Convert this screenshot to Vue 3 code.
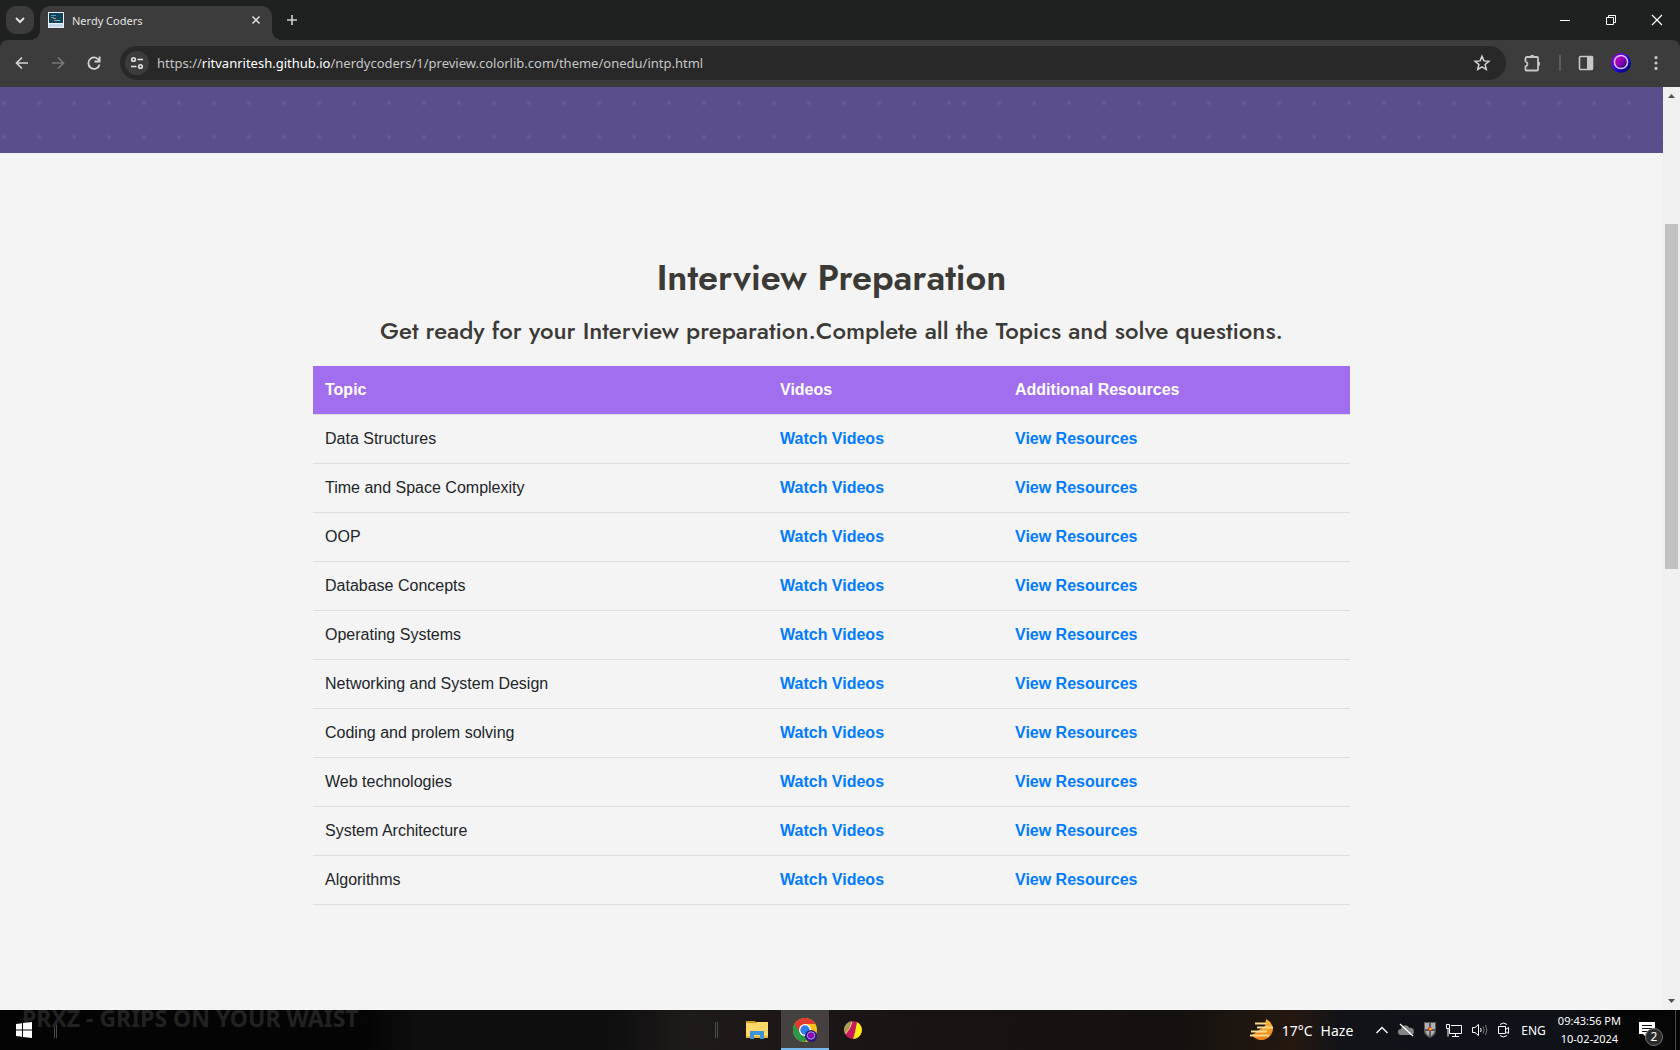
<template>
    <div class="desktop">
        <header class="tabstrip">
            <button class="tabstrip__search" aria-label="Search tabs">
                <svg width="28" height="28" viewBox="0 0 28 28" fill="none" stroke="#e3e3e3" stroke-width="2">
                    <path d="M10 12l4 4 4-4" />
                </svg>
            </button>
            <div class="tab">
                <svg class="tab__favicon" width="16" height="16" viewBox="0 0 16 16">
                    <rect width="16" height="16" fill="#e8f1f8" />
                    <rect x="1" y="1" width="14" height="10" fill="#15435c" />
                    <path d="M3 3.500h5M3 5.500h3" stroke="#4b9fc0" />
                    <path d="M5 6.500h3M6 8.500h2" stroke="#c98a5a" />
                    <path d="M8 8.500h4" stroke="#5bc0c8" />
                    <rect x="1" y="12" width="14" height="3" fill="#c3d8ea" />
                </svg>
                <span class="tab__title">Nerdy Coders</span>
                <button class="tab__close" aria-label="Close tab">
                    <svg width="16" height="16" viewBox="0 0 16 16" stroke="#e3e3e3" stroke-width="1.500">
                        <path d="M4.500 4.500l7 7M11.500 4.500l-7 7" />
                    </svg>
                </button>
            </div>
            <button class="tabstrip__new" aria-label="New tab">
                <svg width="28" height="28" viewBox="0 0 28 28" stroke="#d0d0d0" stroke-width="1.600">
                    <path d="M14 9v10M9 14h10" />
                </svg>
            </button>
            <div class="window-controls">
                <button aria-label="Minimize">
                    <svg width="46" height="40" viewBox="0 0 46 40" stroke="#fff"><path d="M18 20.500h10" /></svg>
                </button>
                <button aria-label="Restore">
                    <svg width="46" height="40" viewBox="0 0 46 40" fill="none" stroke="#fff">
                        <path d="M18.500 17.500h7v7h-7zM20.500 17.500v-2h7v7h-2" />
                    </svg>
                </button>
                <button aria-label="Close">
                    <svg width="46" height="40" viewBox="0 0 46 40" stroke="#fff" stroke-width="1.200">
                        <path d="M18 15l10 10M28 15l-10 10" />
                    </svg>
                </button>
            </div>
        </header>

        <div class="toolbar-wrap">
            <nav class="toolbar">
                <button class="toolbar__button" aria-label="Back">
                    <svg width="20" height="20" viewBox="0 0 20 20" fill="none" stroke="#d4d4d4" stroke-width="1.700">
                        <path d="M16 10H5M10 4.500L4.500 10l5.500 5.500" />
                    </svg>
                </button>
                <button class="toolbar__button" aria-label="Forward" disabled>
                    <svg width="20" height="20" viewBox="0 0 20 20" fill="none" stroke="#777" stroke-width="1.700">
                        <path d="M4 10h11M10 4.500l5.500 5.500-5.500 5.500" />
                    </svg>
                </button>
                <button class="toolbar__button" aria-label="Reload">
                    <svg width="20" height="20" viewBox="0 0 20 20" fill="none" stroke="#d4d4d4" stroke-width="1.800">
                        <path d="M15.500 8.500A5.700 5.700 0 1 0 15.600 11.500M15.600 3.500v5H10.500" />
                    </svg>
                </button>
                <div class="omnibox">
                    <button class="omnibox__info" aria-label="View site information">
                        <svg width="14" height="14" viewBox="0 0 14 14" fill="none" stroke="#e3e3e3" stroke-width="1.600">
                            <circle cx="3.500" cy="3.500" r="1.800" />
                            <path d="M7.500 3.500h5.500M1 10.500h5.500" />
                            <circle cx="10.500" cy="10.500" r="1.800" />
                        </svg>
                    </button>
                    <span class="omnibox__url">https://<b>ritvanritesh.github.io</b>/nerdycoders/1/preview.colorlib.com/theme/onedu/intp.html</span>
                    <button class="omnibox__star" aria-label="Bookmark this tab">
                        <svg width="18" height="18" viewBox="0 0 18 18" fill="none" stroke="#d4d4d4" stroke-width="1.500">
                            <path d="M9 2.300l1.900 4.600 5 .4-3.800 3.200 1.200 4.900L9 12.800l-4.300 2.600 1.200-4.900L2.100 7.300l5-.4z" />
                        </svg>
                    </button>
                </div>
                <div class="toolbar__actions">
                    <button aria-label="Extensions">
                        <svg width="20" height="20" viewBox="0 0 20 20">
                            <path d="M3.500 5.500q0-1.500 1.500-1.500h10q1 0 1 1v11.500q0 1-1 1H4.500q-1 0-1-1v-3q2-.6 2-2.500t-2-2.500z"
                                fill="none" stroke="#c7c7c7" stroke-width="1.800" />
                            <path d="M8 4a2.200 2.200 0 0 1 4.400 0zM16 8.500a2.200 2.200 0 0 1 0 4.400z" fill="#c7c7c7" />
                        </svg>
                    </button>
                    <i class="toolbar__divider"></i>
                    <button aria-label="Side panel">
                        <svg width="16" height="16" viewBox="0 0 16 16">
                            <rect x="1.500" y="1.500" width="13" height="13" rx="1" fill="none" stroke="#c7c7c7" stroke-width="1.600" />
                            <path d="M9 1h6v14H9z" fill="#c7c7c7" />
                        </svg>
                    </button>
                    <button aria-label="Profile">
                        <svg width="20" height="20" viewBox="0 0 20 20">
                            <defs>
                                <linearGradient id="orb" x1="0" y1="0" x2="1" y2="1">
                                    <stop offset="0" stop-color="#d000d8" />
                                    <stop offset="0.500" stop-color="#8a00b0" />
                                    <stop offset="1" stop-color="#1a0a60" />
                                </linearGradient>
                                <linearGradient id="halo" x1="0" y1="0" x2="1" y2="1">
                                    <stop offset="0" stop-color="#b000d0" />
                                    <stop offset="0.600" stop-color="#1a08d0" />
                                    <stop offset="1" stop-color="#050530" />
                                </linearGradient>
                            </defs>
                            <circle cx="10" cy="10" r="10" fill="url(#halo)" />
                            <circle cx="10" cy="9" r="6.600" fill="url(#orb)" stroke="#d0c4ff" stroke-width="1.500" />
                        </svg>
                    </button>
                    <button aria-label="Menu">
                        <svg width="16" height="16" viewBox="0 0 16 16" fill="#c7c7c7">
                            <circle cx="8" cy="2.600" r="1.600" />
                            <circle cx="8" cy="8" r="1.600" />
                            <circle cx="8" cy="13.400" r="1.600" />
                        </svg>
                    </button>
                </div>
            </nav>
        </div>

        <div class="viewport">
            <main class="page">
                <div class="page__banner">
                    <div class="page__pattern"></div>
                    <div class="page__pattern"></div>
                </div>
                <section class="prep">
                    <h2 class="prep__title">Interview Preparation</h2>
                    <h4 class="prep__subtitle">Get ready for your Interview preparation.Complete all the Topics and solve questions.</h4>
                    <table class="prep__table">
                        <thead>
                            <tr>
                                <th class="prep__topic">Topic</th>
                                <th class="prep__videos">Videos</th>
                                <th>Additional Resources</th>
                            </tr>
                        </thead>
                        <tbody>
                            <tr v-for="topic in topics" :key="topic">
                                <td>{{ topic }}</td>
                                <td><a href="#">Watch Videos</a></td>
                                <td><a href="#">View Resources</a></td>
                            </tr>
                        </tbody>
                    </table>
                </section>
            </main>
            <div class="scrollbar">
                <svg width="17" height="17" viewBox="0 0 17 17"><path d="M5 11l3.500-4 3.500 4z" fill="#505050" /></svg>
                <div class="scrollbar__before"></div>
                <div class="scrollbar__thumb"></div>
                <div class="scrollbar__after"></div>
                <svg width="17" height="17" viewBox="0 0 17 17"><path d="M5 6l3.500 4L12 6z" fill="#505050" /></svg>
            </div>
        </div>

        <footer class="taskbar">
            <span class="taskbar__wallpaper">PRXZ - GRIPS ON YOUR WAIST</span>
            <button class="taskbar__start" aria-label="Start">
                <svg width="16" height="16" viewBox="0 0 16 16" fill="#fff">
                    <path d="M0 2l6-.8v6.300H0zM7 1l9-1v7.500H7zM0 8.500h6v6.300L0 14zM7 8.500h9V16l-9-1z" />
                </svg>
            </button>
            <i class="taskbar__grip"></i>
            <div class="taskbar__gap-left"></div>
            <i class="taskbar__grip"></i>
            <div class="taskbar__apps">
                <button aria-label="File Explorer">
                    <svg width="24" height="24" viewBox="0 0 24 24">
                        <path d="M1 3h9l1.500 2H1z" fill="#d99a1c" />
                        <path d="M1 5h9l2-1h11v16H1z" fill="#ffd867" />
                        <path d="M1 18h22v2H1z" fill="#e9b33c" />
                        <path d="M5 13h14v8h-4v-4H9v4H5z" fill="#3a92d8" />
                    </svg>
                </button>
                <button class="taskbar__app--active" aria-label="Google Chrome">
                    <svg width="24" height="24" viewBox="0 0 24 24">
                        <circle cx="12" cy="12" r="12" fill="#fbc116" />
                        <path d="M1.600 6A12 12 0 0 0 12 24l5.200-9L12 12z" fill="#2a9a48" />
                        <path d="M12 6h10.400A12 12 0 0 0 1.600 6l5.200 9z" fill="#e33b2e" />
                        <circle cx="12" cy="12" r="6" fill="#fff" />
                        <circle cx="12" cy="12" r="4.700" fill="#2f7de9" />
                        <circle cx="18" cy="18" r="6" fill="#2a1780" />
                        <circle cx="18" cy="17.500" r="3.700" fill="#8b00b5" stroke="#b59be8" />
                    </svg>
                </button>
                <button aria-label="Media player">
                    <svg width="18" height="18" viewBox="0 0 18 18">
                        <circle cx="9" cy="9" r="9" fill="#c8185e" />
                        <path d="M13 1a9 9 0 0 1-4 17C11 12 12 7 13 1z" fill="#f8ee10" />
                        <path d="M0 9A9 9 0 0 1 8 0Q6 7 1 13z" fill="#a8a050" />
                        <path d="M8 1Q6 8 1.500 13" stroke="#e7df8a" fill="none" />
                    </svg>
                </button>
            </div>
            <div class="taskbar__gap-right"></div>
            <div class="tray">
                <button class="tray__weather">
                    <svg width="24" height="24" viewBox="0 0 24 24">
                        <defs>
                            <linearGradient id="sun" x1="0" y1="0" x2="0" y2="1">
                                <stop offset="0" stop-color="#f7b73a" />
                                <stop offset="1" stop-color="#ef7d17" />
                            </linearGradient>
                        </defs>
                        <path d="M16 1Q22 4 23 10.500A11.500 11.500 0 0 1 2 17L15 8z" fill="url(#sun)" />
                        <path d="M5 5.500h11M7 9.500h16M1 13.500h16M0 17.500h19" stroke="#f8dc8c" stroke-width="1.800" />
                    </svg>
                    <span>17°C</span>
                    <span>Haze</span>
                </button>
                <div class="tray__icons">
                    <svg width="12" height="16" viewBox="0 0 12 16" fill="none" stroke="#fff" stroke-width="1.300">
                        <path d="M.5 11L6 5.500 11.500 11" />
                    </svg>
                    <svg width="16" height="16" viewBox="0 0 16 16">
                        <path d="M3 13a3 3 0 0 1 0-6 4.500 4.500 0 0 1 8.500-1A3.500 3.500 0 0 1 13 13z" fill="#858585" />
                        <path d="M2 2l13 12" stroke="#fff" stroke-width="1.300" />
                    </svg>
                    <svg width="12" height="16" viewBox="0 0 12 16">
                        <path d="M0 0h12v9q0 4-6 7-6-3-6-7z" fill="#5c5c5c" />
                        <path d="M1 1h4v6H1zM7 1h4v6H7zM1.500 9H5v5q-3-2-3.500-5zM7 9h3.500Q10 12 7 14z" fill="#b0b0b0" />
                        <circle cx="6" cy="7" r="2" fill="#e23a20" />
                        <path d="M5.500 6h2v2h-2z" fill="#ffc928" />
                    </svg>
                    <svg width="16" height="16" viewBox="0 0 16 16" fill="none" stroke="#fff">
                        <path d="M5 3.500h10.500v8H3.500V7M9.500 11.500v3M6 14.500h7M.5 2.500h3v4h-3zM2 6.500v8" />
                    </svg>
                    <svg width="16" height="16" viewBox="0 0 16 16" fill="none" stroke="#fff">
                        <path d="M.5 5.500h2.500L6.500 2.500v11L3 10.500H.5z" />
                        <path d="M8.500 6q1.500 2 0 4" />
                        <path d="M11 4.500q2.500 3.500 0 7M13.500 3q3 5 0 10" stroke="#777" />
                    </svg>
                    <svg width="12" height="16" viewBox="0 0 12 16" fill="none" stroke="#fff">
                        <path d="M.5 4.500h7v7h-7zM7.500 7.500l3-2v6l-3-2M2 2.500Q5.500-.5 9 2.500M2 13.500q3.500 3 7 0" />
                    </svg>
                </div>
                <span class="tray__lang">ENG</span>
                <div class="tray__clock">
                    <span>09:43:56 PM</span>
                    <span>10-02-2024</span>
                </div>
                <button class="tray__notify" aria-label="Notifications">
                    <svg width="16" height="16" viewBox="0 0 16 16">
                        <path d="M0 0h16v12H7v3l-3-3H0z" fill="#fff" />
                        <path d="M3 3.500h10M3 6.500h10M3 9.500h6" stroke="#111" />
                    </svg>
                    <span class="tray__badge">2</span>
                </button>
            </div>
        </footer>
    </div>
</template>

<script setup>
import { ref } from 'vue';

const topics = ref([
    'Data Structures',
    'Time and Space Complexity',
    'OOP',
    'Database Concepts',
    'Operating Systems',
    'Networking and System Design',
    'Coding and prolem solving',
    'Web technologies',
    'System Architecture',
    'Algorithms'
]);
</script>

<style>
body {
    margin: 0;
}
</style>

<style scoped>
.desktop {
    display: flex;
    flex-direction: column;
    min-height: 100vh;
    background-color: #f4f4f4;
    font-family: "Segoe UI", "Noto Sans", sans-serif;
}

button {
    display: flex;
    align-items: center;
    justify-content: center;
    padding: 0;
    border: none;
    background: none;
    color: inherit;
    font: inherit;
}

svg {
    display: block;
    flex: none;
}

/* tab strip */
.tabstrip {
    display: flex;
    height: 40px;
    padding-left: 6px;
    background-color: #1f2120;
}

.tabstrip__search {
    width: 28px;
    height: 28px;
    margin: 6px 6px 0 0;
    border-radius: 10px;
    background-color: #3c3c3c;
}

.tab {
    position: relative;
    display: flex;
    align-items: center;
    box-sizing: border-box;
    width: 232px;
    height: 34px;
    margin-top: 6px;
    padding: 0 8px 6px;
    border-radius: 10px 10px 0 0;
    background-color: #3c3c3c;
}

.tab::before,
.tab::after {
    content: "";
    position: absolute;
    bottom: 0;
    width: 10px;
    height: 10px;
}

.tab::before {
    right: 100%;
    background: radial-gradient(circle at 0 0, transparent 10px, #3c3c3c 10px);
}

.tab::after {
    left: 100%;
    background: radial-gradient(circle at 100% 0, transparent 10px, #3c3c3c 10px);
}

.tab__title {
    flex: 1;
    margin-left: 8px;
    color: #e3e3e3;
    font-size: 11px;
}

.tabstrip__new {
    width: 28px;
    height: 28px;
    margin: 6px 0 0 6px;
}

.window-controls {
    display: flex;
    margin-left: auto;
}

/* toolbar */
.toolbar-wrap {
    background-color: #1f2120;
}

.toolbar {
    display: flex;
    align-items: center;
    gap: 16px;
    box-sizing: border-box;
    height: 47px;
    padding: 0 16px 1px 12px;
    border-radius: 8px 8px 0 0;
    background-color: #3c3c3c;
}

.toolbar__button {
    width: 20px;
    height: 20px;
}

.omnibox {
    display: flex;
    flex: 1;
    align-items: center;
    height: 34px;
    padding: 0 15px 0 5px;
    border-radius: 17px;
    background-color: #282828;
}

.omnibox__info {
    width: 24px;
    height: 24px;
    border-radius: 12px;
    background-color: #3c3c3c;
}

.omnibox__url {
    flex: 1;
    margin-left: 8px;
    color: #c7c7c7;
    font-size: 13px;
}

.omnibox__url b {
    color: #fff;
    font-weight: 400;
}

.toolbar__actions {
    display: flex;
    align-items: center;
    gap: 17px;
}

.toolbar__divider {
    width: 2px;
    height: 16px;
    background-color: #5c5c5c;
}

/* web page */
.viewport {
    display: flex;
    flex: 1;
}

.page {
    flex: 1;
    background-color: #f4f4f4;
}

.page__banner {
    display: grid;
    grid-template-columns: 960px 1fr;
    height: 66px;
    background-color: #5a4e8c;
}

/* the dotted tile restarts every 960px */
.page__pattern {
    background-image: radial-gradient(circle at 4px 16px, #665a98 1px, transparent 3px);
    background-size: 35px 34px;
}

.prep {
    max-width: 1037px;
    margin: 0 auto;
    padding: 102px 16px 96px;
    color: #3b3a36;
    text-align: center;
}

.prep__title,
.prep__subtitle {
    margin: 0;
    font-family: Jost, Lato, sans-serif;
}

.prep__title {
    font-size: 36px;
    font-weight: 600;
    line-height: 44px;
}

.prep__subtitle {
    margin-top: 17px;
    font-size: 24px;
    font-weight: 500;
    line-height: 30px;
}

.prep__table {
    width: 100%;
    margin-top: 20px;
    border-collapse: separate;
    border-spacing: 0;
    table-layout: fixed;
    color: #212529;
    font-family: Arial, "Liberation Sans", sans-serif;
    font-size: 16px;
    line-height: 24px;
    text-align: left;
}

.prep__table th,
.prep__table td {
    padding: 12px;
    border-bottom: 1px solid #dddddd;
}

.prep__table th {
    background-color: #a06eef;
    background-clip: padding-box;
    color: #fff;
}

.prep__topic {
    width: 431px;
}

.prep__videos {
    width: 211px;
}

.prep__table a {
    color: #007bff;
    font-weight: 700;
    text-decoration: none;
}

.scrollbar {
    display: flex;
    flex-direction: column;
    width: 17px;
    background-color: #f0f0f0;
}

.scrollbar__before {
    flex: 120;
}

.scrollbar__thumb {
    flex: 345;
    margin: 0 2px;
    background-color: #c1c1c1;
}

.scrollbar__after {
    flex: 424;
}

/* taskbar */
.taskbar {
    position: relative;
    display: flex;
    align-items: center;
    height: 40px;
    background: linear-gradient(90deg, #040404 0%, #050505 22%, #0f0f10 25%, #0e0e0e 36%, #1e1a19 41%, #191413 55%, #15110f 70%, #24180f 77%, #111319 80%, #10121a 93%, #050505 96%);
    color: #fff;
}

.taskbar__wallpaper {
    position: absolute;
    top: 0;
    left: 22px;
    color: #222;
    font-family: "Noto Sans", sans-serif;
    font-size: 23px;
    font-weight: 700;
    line-height: 16px;
    white-space: nowrap;
}

.taskbar__start {
    position: relative;
    width: 48px;
    height: 40px;
}

.taskbar__grip {
    width: 1px;
    height: 16px;
    margin-left: 6px;
    border: solid #4c4c4c;
    border-width: 0 1px;
}

.taskbar__gap-left {
    flex: 652;
}

.taskbar__apps {
    display: flex;
    margin-left: 15px;
}

.taskbar__apps button {
    box-sizing: border-box;
    width: 48px;
    height: 40px;
}

.taskbar__apps .taskbar__app--active {
    border-top: 2px solid #454140;
    border-bottom: 2px solid #76b9ed;
    background-color: #454140;
}

.taskbar__gap-right {
    flex: 373;
}

.tray {
    display: flex;
    align-items: center;
    margin-right: 4px;
    padding-right: 12px;
    height: 40px;
    border-right: 1px solid #4a4a4a;
}

.tray__weather {
    gap: 8px;
    font-size: 14px;
}

.tray__icons {
    display: flex;
    align-items: center;
    gap: 10px;
    margin-left: 23px;
}

.tray__lang {
    margin-left: 11px;
    font-size: 12px;
}

.tray__clock {
    display: flex;
    flex-direction: column;
    align-items: center;
    margin-left: 12px;
    font-size: 11px;
    line-height: 18px;
}

.tray__notify {
    position: relative;
    justify-content: flex-start;
    width: 24px;
    height: 24px;
    margin-left: 18px;
}

.tray__badge {
    position: absolute;
    right: 0;
    bottom: -4px;
    box-sizing: border-box;
    width: 18px;
    height: 18px;
    border: 1px solid #777;
    border-radius: 9px;
    background-color: #2a2a2a;
    font-size: 12px;
    line-height: 16px;
    text-align: center;
}
</style>
